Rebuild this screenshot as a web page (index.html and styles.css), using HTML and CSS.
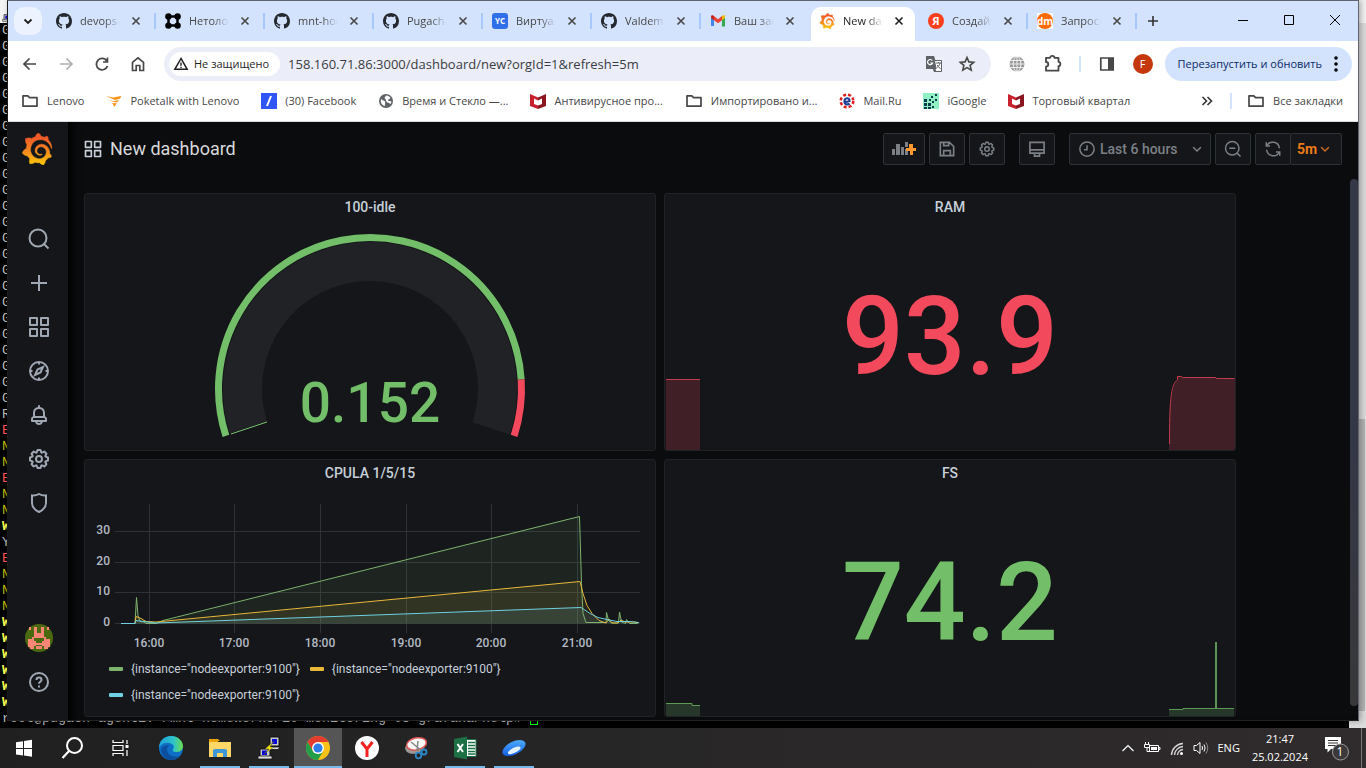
FILE: index.html
```html
<!DOCTYPE html>
<html lang="ru">
<head>
<meta charset="utf-8">
<title>New dashboard - Grafana</title>
<link rel="stylesheet" href="styles.css">
</head>
<body>
<svg class="defs" aria-hidden="true">
  <defs>
    <linearGradient id="gf" x1="0" y1="0" x2="0" y2="1"><stop offset="0.15" stop-color="#f05a28"/><stop offset="0.55" stop-color="#f7861f"/><stop offset="1" stop-color="#fbca0a"/></linearGradient>
    <linearGradient id="edgeTop" x1="0" y1="0" x2="1" y2="0"><stop offset="0" stop-color="#1fa0d8"/><stop offset="0.6" stop-color="#2cc3c9"/><stop offset="1" stop-color="#6fdc4f"/></linearGradient>
    <linearGradient id="disc" x1="0" y1="1" x2="1" y2="0"><stop offset="0" stop-color="#0a4fe0"/><stop offset="1" stop-color="#58bcff"/></linearGradient>
    <symbol id="i-github" viewBox="0 0 16 16"><path fill="#24292f" d="M8 0C3.58 0 0 3.58 0 8c0 3.54 2.29 6.53 5.47 7.59.4.07.55-.17.55-.38 0-.19-.01-.82-.01-1.49-2.01.37-2.53-.49-2.69-.94-.09-.23-.48-.94-.82-1.13-.28-.15-.68-.52-.01-.53.63-.01 1.08.58 1.23.82.72 1.21 1.87.87 2.33.66.07-.52.28-.87.51-1.07-1.78-.2-3.64-.89-3.64-3.95 0-.87.31-1.59.82-2.15-.08-.2-.36-1.02.08-2.12 0 0 .67-.21 2.2.82.64-.18 1.32-.27 2-.27s1.36.09 2 .27c1.53-1.04 2.2-.82 2.2-.82.44 1.1.16 1.92.08 2.12.51.56.82 1.27.82 2.15 0 3.07-1.87 3.75-3.65 3.95.29.25.54.73.54 1.48 0 1.07-.01 1.93-.01 2.2 0 .21.15.46.55.38A8.01 8.01 0 0 0 16 8c0-4.42-3.58-8-8-8z"/></symbol>
    <symbol id="i-close" viewBox="0 0 16 16"><path d="M4.5 4.5l7 7m0-7l-7 7" stroke="currentColor" stroke-width="1.6" fill="none"/></symbol>
    <symbol id="i-grafana" viewBox="0 0 24 24"><path fill="url(#gf)" stroke="url(#gf)" stroke-width=".4" d="M23.02 10.59a8.578 8.578 0 0 0-.862-3.034 8.911 8.911 0 0 0-1.789-2.445c.337-1.342-.413-2.505-.413-2.505-1.292-.08-2.113.4-2.416.62-.052-.02-.102-.044-.154-.064-.22-.089-.446-.172-.677-.247-.231-.073-.47-.14-.711-.197a9.867 9.867 0 0 0-.875-.161C14.557.753 12.94 0 12.94 0c-1.804 1.145-2.147 2.744-2.147 2.744l-.018.093c-.098.029-.2.057-.298.088-.138.042-.275.094-.413.143-.138.055-.275.107-.41.166a8.869 8.869 0 0 0-1.557.87l-.063-.029c-2.497-.955-4.716.195-4.716.195-.203 2.658.996 4.33 1.235 4.636a11.608 11.608 0 0 0-.607 2.635C1.636 12.677.953 15.014.953 15.014c1.926 2.214 4.171 2.351 4.171 2.351.003-.002.006-.002.006-.005.285.509.615.994.986 1.446.156.19.32.371.488.548-.704 2.009.099 3.68.099 3.68 2.144.08 3.553-.937 3.849-1.173a9.784 9.784 0 0 0 3.164.501h.08l.055-.003.107-.002.103-.005.003.002c1.01 1.44 2.788 1.646 2.788 1.646 1.264-1.332 1.337-2.653 1.337-2.94v-.058c0-.02-.003-.039-.003-.06.265-.187.52-.387.758-.6a7.875 7.875 0 0 0 1.415-1.7c1.43.083 2.437-.885 2.437-.885-.236-1.49-1.085-2.216-1.264-2.354l-.018-.013-.016-.013a.217.217 0 0 1-.031-.02c.008-.092.016-.18.02-.27.011-.162.016-.323.016-.48v-.253l-.005-.098-.008-.135a1.891 1.891 0 0 0-.01-.13c-.003-.042-.008-.083-.013-.125l-.016-.124-.018-.122a6.215 6.215 0 0 0-2.032-3.73 6.015 6.015 0 0 0-3.222-1.46 6.292 6.292 0 0 0-.85-.048l-.107.002h-.063l-.044.003-.104.008a4.777 4.777 0 0 0-3.335 1.695c-.332.4-.592.84-.768 1.297a4.594 4.594 0 0 0-.312 1.817l.003.091c.005.055.007.11.013.164a3.615 3.615 0 0 0 .698 1.82 3.53 3.53 0 0 0 1.827 1.282c.33.098.66.14.971.137.039 0 .078 0 .114-.002l.063-.003c.02 0 .041-.003.062-.003.034-.002.065-.007.099-.01.007 0 .018-.003.028-.003l.031-.005.06-.008a1.18 1.18 0 0 0 .112-.02c.036-.008.072-.013.109-.024a2.634 2.634 0 0 0 .914-.415c.028-.02.056-.041.085-.065a.248.248 0 0 0 .039-.35.244.244 0 0 0-.309-.06l-.078.042c-.09.044-.184.083-.283.116a2.476 2.476 0 0 1-.475.096c-.028.003-.054.006-.083.006l-.083.002c-.026 0-.054 0-.08-.002l-.102-.006h-.012l-.024.006c-.016-.003-.031-.003-.044-.006-.031-.002-.06-.007-.091-.01a2.59 2.59 0 0 1-.724-.213 2.557 2.557 0 0 1-.667-.438 2.52 2.52 0 0 1-.805-1.475 2.306 2.306 0 0 1-.029-.444l.006-.122v-.023l.002-.031c.003-.021.003-.04.005-.06a3.163 3.163 0 0 1 1.352-2.29 3.12 3.12 0 0 1 .937-.43 2.946 2.946 0 0 1 .776-.101h.06l.07.002.045.003h.026l.07.005a4.041 4.041 0 0 1 1.635.49 3.94 3.94 0 0 1 1.602 1.662 3.77 3.77 0 0 1 .397 1.414l.005.076.003.075c.002.026.002.05.002.075 0 .024.003.052 0 .07v.065l-.002.073-.008.174a6.195 6.195 0 0 1-.08.639 5.1 5.1 0 0 1-.267.927 5.31 5.31 0 0 1-.624 1.13 5.052 5.052 0 0 1-3.237 2.014 4.82 4.82 0 0 1-.649.066l-.039.003h-.287a6.607 6.607 0 0 1-1.716-.265 6.776 6.776 0 0 1-3.4-2.274 6.75 6.75 0 0 1-.746-1.15 6.616 6.616 0 0 1-.714-2.596l-.005-.083-.002-.02v-.056l-.003-.073v-.096l-.003-.104v-.07l.003-.163c.008-.22.026-.45.054-.678a8.707 8.707 0 0 1 .28-1.355c.128-.444.286-.872.473-1.277a7.04 7.04 0 0 1 1.456-2.1 5.925 5.925 0 0 1 .953-.763c.169-.111.343-.213.524-.306.089-.05.182-.091.273-.135.047-.02.093-.042.138-.062a7.177 7.177 0 0 1 .714-.267l.145-.045c.049-.015.098-.026.148-.041.098-.029.197-.052.296-.076.049-.013.1-.02.15-.033l.15-.032.151-.028.076-.013.075-.01.153-.024c.057-.01.114-.013.171-.023l.169-.021c.036-.003.073-.008.106-.01l.073-.008.036-.003.042-.002c.057-.003.114-.008.171-.01l.086-.006h.023l.037-.003.145-.007a7.999 7.999 0 0 1 1.708.125 7.917 7.917 0 0 1 2.048.68 8.253 8.253 0 0 1 1.672 1.09l.09.077.089.078c.06.052.114.107.171.159.057.052.112.106.166.16.052.055.107.107.159.164a8.671 8.671 0 0 1 1.41 1.978c.012.026.028.052.04.078l.04.078.075.156c.023.051.05.1.07.153l.065.15a8.848 8.848 0 0 1 .45 1.34.19.19 0 0 0 .201.142.186.186 0 0 0 .172-.184c.01-.246.002-.532-.024-.856z"/></symbol>
    <symbol id="i-folder" viewBox="0 0 18 16"><path d="M2 13.2V2.8h4.8l1.8 1.9h7.4v8.5z" fill="none" stroke="#474747" stroke-width="1.7" stroke-linejoin="round"/></symbol>
    <symbol id="i-mcafee" viewBox="0 0 16 16"><path fill="#c8202c" d="M0 1l8 3.5V16l-8-3z"/><path fill="#8c1620" d="M16 1L8 4.500V16l8-3z"/><path fill="#fff" d="M4 5.600l4 1.800 4-1.800v5.400l-4 1.400-4-1.400z"/></symbol>
    <symbol id="i-cog" viewBox="0 0 24 24"><path fill="currentColor" d="M21.32,9.55l-1.89-.63.89-1.78A1,1,0,0,0,20.13,6L18,3.87a1,1,0,0,0-1.15-.19l-1.78.89-.63-1.89A1,1,0,0,0,13.5,2h-3a1,1,0,0,0-.95.68L8.92,4.57,7.14,3.68A1,1,0,0,0,6,3.87L3.87,6a1,1,0,0,0-.19,1.15l.89,1.78-1.89.63A1,1,0,0,0,2,10.5v3a1,1,0,0,0,.68.95l1.89.63-.89,1.78A1,1,0,0,0,3.87,18L6,20.13a1,1,0,0,0,1.15.19l1.78-.89.63,1.89a1,1,0,0,0,.95.68h3a1,1,0,0,0,.95-.68l.63-1.89,1.78.89A1,1,0,0,0,18,20.13L20.13,18a1,1,0,0,0,.19-1.150l-.89-1.78,1.89-.63A1,1,0,0,0,22,13.5v-3A1,1,0,0,0,21.32,9.55ZM20,12.78l-1.2.4A2,2,0,0,0,17.64,16l.57,1.14-1.1,1.1L16,17.64a2,2,0,0,0-2.79,1.16l-.4,1.2H11.22l-.4-1.2A2,2,0,0,0,8,17.64l-1.14.57-1.1-1.1L6.36,16A2,2,0,0,0,5.2,13.18L4,12.78V11.22l1.2-.4A2,2,0,0,0,6.36,8L5.79,6.89l1.1-1.1L8,6.36A2,2,0,0,0,10.82,5.2l.4-1.2h1.56l.4,1.2A2,2,0,0,0,16,6.36l1.14-.57,1.1,1.1L17.64,8a2,2,0,0,0,1.16,2.79l1.2.4ZM12,8a4,4,0,1,0,4,4A4,4,0,0,0,12,8Zm0,6a2,2,0,1,1,2-2A2,2,0,0,1,12,14Z"/></symbol>
    <symbol id="i-apps" viewBox="0 0 24 24"><path d="M3 3h7v7H3zM14 3h7v7h-7zM3 14h7v7H3zM14 14h7v7h-7z" fill="none" stroke="currentColor" stroke-width="2" stroke-linejoin="round"/></symbol>
    <symbol id="i-angle" viewBox="0 0 16 16"><path d="M4.500 6.500l3.500 3.500 3.500-3.500" fill="none" stroke="currentColor" stroke-width="1.5" stroke-linecap="round"/></symbol>
    <symbol id="i-putty" viewBox="0 0 24 24"><path d="M13 1h9v9h-9zM3 13h10v8H3z" fill="#c9c9c9" stroke="#111"/><path d="M15 3h5v5h-5zM5 14.500h5v4.500H5z" fill="#0808d8"/><path d="M11 11h12l-2 2.500H11zM1 20h14v3H1z" fill="#ddd" stroke="#111" stroke-width=".8"/><path d="M17 5l-9 8h4l-5 5 10-7h-4z" fill="#ffee00" stroke="#444" stroke-width=".5"/></symbol>
  </defs>
</svg>

<div class="desktop">
  <section class="terminal" aria-label="Terminal">
    <div class="terminal-title"><svg width="16" height="16"><use href="#i-putty"/></svg></div>
    <div class="terminal-main">
      <div class="terminal-lines">
        <p>G</p><p>G</p><p>G</p><p>G</p><p>G</p><p>G</p><p>G</p><p>G</p><p>G</p><p>G</p><p>G</p><p>G</p>
        <p>G</p><p>G</p><p>G</p><p>G</p><p>G</p><p>G</p><p>G</p><p>G</p><p>G</p><p>G</p><p>G</p><p>G</p>
        <p>R</p><p class="t-red">E</p><p class="t-olive">N</p><p class="t-olive">N</p><p class="t-red">E</p><p class="t-olive">N</p><p class="t-olive">N</p>
        <p class="t-yellow">W</p><p>Y</p><p class="t-red">E</p><p class="t-olive">N</p><p class="t-olive">N</p><p class="t-olive">N</p>
        <p class="t-yellow">W</p><p class="t-yellow">W</p><p class="t-yellow">W</p><p class="t-yellow">W</p><p class="t-yellow">W</p><p class="t-yellow">W</p>
        <p>root@pugach-agent1:~/mnt-homeworks/10-monitoring-03-grafana/help# <span class="cursor"></span></p>
      </div>
      <div class="terminal-scroll"><i></i></div>
    </div>
  </section>

  <main class="browser">
    <div class="tabstrip">
      <button class="tab-search" aria-label="Поиск вкладок"><svg width="16" height="16" viewBox="0 0 16 16"><path d="M4.500 6.500L8 10l3.500-3.500" fill="none" stroke="#1f1f1f" stroke-width="1.800"/></svg></button>
      <div class="tabs">
        <div class="tab"><svg class="fav"><use href="#i-github"/></svg><span>devops-n</span><button aria-label="Закрыть"><svg><use href="#i-close"/></svg></button></div>
        <div class="tab"><svg class="fav" viewBox="0 0 16 16"><path d="M4 3.500h8M4 12.500h8M3.500 4v8M12.500 4v8" stroke="#000" stroke-width="2.500"/><circle cx="3.400" cy="3.400" r="3.200"/><circle cx="12.600" cy="3.400" r="3.200"/><circle cx="3.400" cy="12.600" r="3.200"/><circle cx="12.600" cy="12.600" r="3.200"/></svg><span>Нетология</span><button aria-label="Закрыть"><svg><use href="#i-close"/></svg></button></div>
        <div class="tab"><svg class="fav"><use href="#i-github"/></svg><span>mnt-home</span><button aria-label="Закрыть"><svg><use href="#i-close"/></svg></button></div>
        <div class="tab"><svg class="fav"><use href="#i-github"/></svg><span>Pugach-D</span><button aria-label="Закрыть"><svg><use href="#i-close"/></svg></button></div>
        <div class="tab"><svg class="fav" viewBox="0 0 16 16"><rect width="16" height="16" rx="3" fill="#2f6fe8"/><text x="8" y="11" class="yc">YC</text></svg><span>Виртуаль</span><button aria-label="Закрыть"><svg><use href="#i-close"/></svg></button></div>
        <div class="tab"><svg class="fav"><use href="#i-github"/></svg><span>Valdemar</span><button aria-label="Закрыть"><svg><use href="#i-close"/></svg></button></div>
        <div class="tab before-active"><svg class="fav" viewBox="0 0 16 16"><path fill="#4285f4" d="M1 4v9h3V6z"/><path fill="#34a853" d="M12 6v7.500h3V4z"/><path fill="#c5221f" d="M1 3.500C1 2 2.600 2 3.300 2.500L4 3v4.300L1 5z"/><path fill="#ea4335" d="M4 3l4 3.200L12 3v4.300L8 10.300 4 7.300z"/><path fill="#fbbc04" d="M15 3.500c0-1.500-1.600-1.500-2.300-1L12 3v4.300L15 5z"/></svg><span>Ваш зака</span><button aria-label="Закрыть"><svg><use href="#i-close"/></svg></button></div>
        <div class="tab active"><svg class="fav"><use href="#i-grafana"/></svg><span>New dash</span><button aria-label="Закрыть"><svg><use href="#i-close"/></svg></button></div>
        <div class="tab"><svg class="fav" viewBox="0 0 16 16"><circle cx="8" cy="8" r="8" fill="#fc3f1d"/><text x="8" y="12" class="ya">Я</text></svg><span>Создайте</span><button aria-label="Закрыть"><svg><use href="#i-close"/></svg></button></div>
        <div class="tab"><svg class="fav" viewBox="0 0 16 16"><rect width="16" height="16" fill="#fff"/><circle cx="8" cy="8" r="8" fill="#ff6a00"/><text x="8" y="12" class="dm">dm</text></svg><span>Запросы</span><button aria-label="Закрыть"><svg><use href="#i-close"/></svg></button></div>
      </div>
      <button class="new-tab" aria-label="Новая вкладка"><svg width="16" height="16" viewBox="0 0 16 16"><path d="M8 3v10M3 8h10" stroke="#333" stroke-width="1.600"/></svg></button>
      <div class="win-controls">
        <button aria-label="Свернуть"><svg width="12" height="12" viewBox="0 0 12 12"><path d="M1 6.500h10" stroke="#000"/></svg></button>
        <button aria-label="Развернуть"><svg width="12" height="12" viewBox="0 0 12 12"><path d="M1.500 1.500h9v9h-9z" fill="none" stroke="#000"/></svg></button>
        <button aria-label="Закрыть окно"><svg width="12" height="12" viewBox="0 0 12 12"><path d="M1 1l10 10M11 1L1 11" stroke="#000"/></svg></button>
      </div>
    </div>

    <div class="toolbar">
      <button aria-label="Назад"><svg viewBox="0 0 20 20"><path d="M16 10H4.500M9.500 4.500L4 10l5.500 5.500" fill="none" stroke="#474747" stroke-width="1.700"/></svg></button>
      <button aria-label="Вперёд"><svg viewBox="0 0 20 20"><path d="M4 10h11.500M10.500 4.500L16 10l-5.500 5.500" fill="none" stroke="#b0b0b0" stroke-width="1.700"/></svg></button>
      <button aria-label="Обновить"><svg viewBox="0 0 20 20"><path d="M15.500 12A5.700 5.700 0 1 1 15 7.200" fill="none" stroke="#474747" stroke-width="1.800"/><path d="M16.300 3.500v5.300H11v-1.500h2.500L15 3.500z" fill="#474747"/></svg></button>
      <button aria-label="Главная"><svg viewBox="0 0 20 20"><path d="M4.500 16.500V8.300L10 3.800l5.500 4.500v8.200h-3.700v-5H8.200v5z" fill="none" stroke="#474747" stroke-width="1.700"/></svg></button>
      <div class="omnibox">
        <button class="chip"><svg width="16" height="16" viewBox="0 0 16 16"><path d="M8 2.500L1.800 13.300h12.400z" fill="none" stroke="#1f1f1f" stroke-width="1.500"/><path d="M8 6.500v3.300M8 10.700v1.400" stroke="#1f1f1f" stroke-width="1.400"/></svg>Не защищено</button>
        <input type="text" aria-label="Адрес" value="158.160.71.86:3000/dashboard/new?orgId=1&amp;refresh=5m">
        <button aria-label="Перевести"><svg viewBox="0 0 20 20"><path d="M2 2h8l1.300 4H17v12h-7l-1.200-3H2z" fill="#5f6368"/><path d="M10.500 6.500H17.500v11h-5.500l-1.500-2.500h1.500z" fill="#fff" stroke="#5f6368"/><path d="M12 9h5M14.500 8v1M16 9c-.5 2.500-2 4-3.500 5M13 11l3.500 4" stroke="#5f6368" fill="none"/><path d="M8.300 6.600A2.600 2.600 0 1 0 8.600 9H6.300" stroke="#fff" stroke-width="1.200" fill="none"/></svg></button>
        <button aria-label="В закладки"><svg viewBox="0 0 20 20"><path d="M10 3.500l1.900 4.400 4.800.4-3.600 3.100 1.100 4.700L10 13.600l-4.200 2.500 1.100-4.700-3.600-3.100 4.800-.4z" fill="none" stroke="#474747" stroke-width="1.600"/></svg></button>
      </div>
      <div class="extensions">
        <button aria-label="Расширение"><svg viewBox="0 0 20 20"><circle cx="10" cy="10" r="7.500" fill="#9a9a9a"/><path d="M2.500 10h15M10 2.500v15M3.500 6.500h13M3.500 13.500h13" stroke="#fff" stroke-width=".8"/><ellipse cx="10" cy="10" rx="3.800" ry="7.500" fill="none" stroke="#fff" stroke-width=".8"/></svg></button>
        <button aria-label="Расширения"><svg viewBox="0 0 20 20"><path d="M3 3.800h4c0-2.500 4.500-2.500 4.500 0h4v4c2.500 0 2.500 4.400 0 4.400v4.500H3v-4c3 0 3-4.700 0-4.700z" fill="none" stroke="#474747" stroke-width="1.800" stroke-linejoin="round"/></svg></button>
        <i class="sep"></i>
        <button aria-label="Боковая панель"><svg viewBox="0 0 20 20"><path d="M3.800 4h12.400v12H3.800z" fill="none" stroke="#474747" stroke-width="1.700"/><path d="M11 4h5v12h-5z" fill="#474747"/></svg></button>
        <button class="profile">F</button>
      </div>
      <button class="restart">Перезапустить и обновить<svg width="4" height="16" viewBox="0 0 4 16"><circle cx="2" cy="2" r="1.800"/><circle cx="2" cy="8" r="1.800"/><circle cx="2" cy="14" r="1.800"/></svg></button>
    </div>

    <nav class="bookmarks">
      <a href="#"><svg class="folder"><use href="#i-folder"/></svg>Lenovo</a>
      <a href="#"><svg viewBox="0 0 16 16"><path fill="#f7941d" d="M0 3l7 1.500L15 3c0 2-1 3-3 3.300L9 7zM2 7l5 1 6-.8c-.5 1.800-2 2.200-4 2zM6 10l5 .2L8 14l-.5-2z"/></svg>Poketalk with Lenovo</a>
      <a href="#"><svg viewBox="0 0 16 16"><path fill="#2f55f5" d="M0 0h16v16H0z"/><path d="M10 3L6 13" stroke="#fff" stroke-width="2"/></svg>(30) Facebook</a>
      <a href="#"><svg viewBox="0 0 16 16"><circle cx="8" cy="8" r="7" fill="#5f6368"/><path fill="#fff" d="M3 6c2 2 3 1 4 2.500S6 11 7.500 13c-3 0-5.500-3-4.500-7zM8 2.500c2 0 4 1 4.500 2.500-1 1.500-2 .5-2.500 2.500 1 1 3 0 3.500 1.500l-1 2c-2-2-4-1-4.500-3.500C8 6 7 6 6.500 5z"/></svg>Время и Стекло —...</a>
      <a href="#"><svg><use href="#i-mcafee"/></svg>Антивирусное про...</a>
      <a href="#"><svg class="folder"><use href="#i-folder"/></svg>Импортировано и...</a>
      <a href="#"><svg viewBox="0 0 16 16"><circle cx="8" cy="8" r="6.300" fill="none" stroke="#e02020" stroke-width="2.600" stroke-dasharray="3 2"/><path d="M5.500 9.500l5-1.500c0-4-5-3.500-5 .5 0 3.500 4 3.300 5 2" fill="none" stroke="#1c3f94" stroke-width="2.200"/></svg>Mail.Ru</a>
      <a href="#"><svg viewBox="0 0 16 16"><path fill="#8ff0c4" d="M0 0h16v16H0z"/><path d="M1 6h3v3H1zM1 10h3v3H1zM5 10h3v3H5zM1 14h3v2H1zM5 14h3v2H5zM9 13h2v2H9zM6 6h2v2H6zM9 8h2v2H9zM8 3h2v2H8zM12 1h2v2h-2zM12 6h2v2h-2z" fill="#0b3b4f"/></svg>iGoogle</a>
      <a href="#"><svg><use href="#i-mcafee"/></svg>Торговый квартал</a>
      <div class="bookmarks-end">
        <button aria-label="Ещё закладки"><svg viewBox="0 0 16 16"><path d="M3.500 4l4 4-4 4M8.500 4l4 4-4 4" fill="none" stroke="#333" stroke-width="1.600"/></svg></button>
        <i class="sep"></i>
        <a href="#"><svg class="folder"><use href="#i-folder"/></svg>Все закладки</a>
      </div>
    </nav>

    <div class="grafana">
      <aside class="sidebar">
        <a href="#" class="logo" aria-label="Grafana"><svg width="32" height="32"><use href="#i-grafana"/></svg></a>
        <nav class="menu">
          <a href="#" aria-label="Search"><svg viewBox="0 0 24 24"><circle cx="11" cy="11" r="8.500"/><path d="M17 17l4.500 4.500"/></svg></a>
          <a href="#" aria-label="Create"><svg viewBox="0 0 24 24"><path d="M12 4v16M4 12h16"/></svg></a>
          <a href="#" aria-label="Dashboards"><svg><use href="#i-apps"/></svg></a>
          <a href="#" aria-label="Explore"><svg viewBox="0 0 24 24"><circle cx="12" cy="12" r="9"/><path d="M16 8l-2.500 5.500L8 16l2.500-5.500z M12 3v2.500M12 18.500V21M3 12h2.500M18.500 12H21"/></svg></a>
          <a href="#" aria-label="Alerting"><svg viewBox="0 0 24 24"><path class="solid" d="M18,13.180V10a6,6,0,0,0-5-5.910V3a1,1,0,0,0-2,0V4.090A6,6,0,0,0,6,10v3.180A3,3,0,0,0,4,16v2a1,1,0,0,0,1,1H8.140a4,4,0,0,0,7.720,0H19a1,1,0,0,0,1-1V16A3,3,0,0,0,18,13.180ZM8,10a4,4,0,0,1,8,0v3H8Zm4,10a2,2,0,0,1-1.720-1h3.440A2,2,0,0,1,12,20Zm6-3H6V16a1,1,0,0,1,1-1H17a1,1,0,0,1,1,1Z"/></svg></a>
          <a href="#" aria-label="Configuration"><svg class="plain"><use href="#i-cog"/></svg></a>
          <a href="#" aria-label="Server admin"><svg viewBox="0 0 24 24"><path d="M5 4.500q3.500.5 7-1.500 3.500 2 7 1.500V12q0 5.500-7 9-7-3.500-7-9z"/></svg></a>
        </nav>
        <nav class="menu menu-bottom">
          <a href="#" aria-label="Profile"><svg class="avatar" viewBox="0 0 28 28"><circle cx="14" cy="14" r="14" fill="#4b6a10"/><path fill="#ff8676" d="M4 3h2v3H4zM22 3h2v3h-2zM9 3h3v6h4V3h3v11H9zM3 15h4v-2h2v4h2v2h6v-2h2v-4h2v2h4v8h-2v2h-4v-3h-2v-1h-6v1H9v3H5v-2H3zM11 22h6v3h-6z"/></svg></a>
          <a href="#" aria-label="Help"><svg viewBox="0 0 24 24"><circle cx="12" cy="12" r="9"/><path d="M9.500 10c0-3.200 5-3.200 5 0 0 1.800-2.500 1.800-2.500 3.800M12 15.500v2"/></svg></a>
        </nav>
      </aside>

      <section class="dash">
        <header class="dash-head">
          <svg class="apps" width="20" height="20"><use href="#i-apps"/></svg>
          <h1>New dashboard</h1>
          <div class="group">
            <button class="wide" aria-label="Add panel"><svg width="26" height="20" viewBox="0 0 26 20"><path fill="#7b8087" d="M1 10h3v6H1zM5 5h4v11H5zM10 8h3v8h-3zM14 3h3v5h-3v2h3v6h-3z"/><path fill="#ff9830" d="M18 5h4v4h3v3h-3v4h-3v-4h-4V9h3z"/></svg></button>
            <button aria-label="Save"><svg width="20" height="20" viewBox="0 0 24 24"><path d="M4 4h11l5 5v11H4zM8 4v4h6V4M8 20v-6h8v6"/></svg></button>
            <button aria-label="Settings"><svg class="plain" width="18" height="18"><use href="#i-cog"/></svg></button>
          </div>
          <div class="group"><button aria-label="View mode"><svg width="20" height="20" viewBox="0 0 24 24"><path d="M3.500 4h17v13h-17zM3.500 13h17M9 17v3.500h6V17"/></svg></button></div>
          <div class="group">
            <button class="range"><svg width="18" height="18" viewBox="0 0 24 24"><circle cx="12" cy="12" r="9.500"/><path d="M12 7v6H8"/></svg><span>Last 6 hours</span><svg class="plain" width="16" height="16"><use href="#i-angle"/></svg></button>
            <button aria-label="Zoom out"><svg width="18" height="18" viewBox="0 0 24 24"><circle cx="11" cy="11" r="9"/><path d="M17.500 17.500L22 22M7 11h8"/></svg></button>
            <div class="refresh">
              <button aria-label="Refresh"><svg width="18" height="18" viewBox="0 0 24 24"><path d="M3 3v5h5M21 21v-5h-5M3.500 8a9 9 0 0 1 17 3M20.500 16a9 9 0 0 1-17-3"/></svg></button>
              <button class="interval">5m<svg class="plain" width="16" height="16"><use href="#i-angle"/></svg></button>
            </div>
          </div>
        </header>

        <div class="panels">
          <article class="panel">
            <h2>100-idle</h2>
            <svg class="fill" viewBox="85 223 570 228">
              <path d="M230.200 435.400A147 147 0 1 1 509.800 435.400L472.700 423.400A108 108 0 1 0 267.300 423.400Z" fill="#202226"/>
              <path d="M225.900 436.800A151.500 151.500 0 1 1 521.200 380.500" fill="none" stroke="#73bf69" stroke-width="7"/>
              <path d="M521.200 380.500A151.500 151.500 0 0 1 514.100 436.800" fill="none" stroke="#f2495c" stroke-width="7"/>
              <path d="M231 435L267 423" stroke="#73bf69"/>
              <text x="370" y="423" class="gauge-value">0.152</text>
            </svg>
          </article>
          <article class="panel">
            <h2>RAM</h2>
            <svg class="spark" viewBox="0 0 570 84" preserveAspectRatio="none">
              <path class="red-area" d="M1 84V13h34v71zM504 84V70l1-28 2-14 3-10 3-4V10l4 0 1 1h33l1 1h18v72z"/>
              <path class="red-line" d="M1 13.500h34M504.500 78c0-40 1-60 8-64v-3.500h4l1 1h33l1 1h18"/>
            </svg>
            <p class="big red">93.9</p>
          </article>
          <article class="panel">
            <h2>CPULA 1/5/15</h2>
            <svg class="fill" viewBox="85 488 570 168">
              <path class="grid" d="M115 531.500H640M115 562.500H640M115 592.500H640M115 623.500H640M149.500 504V633M234.500 504V633M320.500 504V633M406.500 504V633M491.500 504V633M577.500 504V633"/>
              <g class="axis">
                <text x="149" y="647">16:00</text><text x="234" y="647">17:00</text><text x="320" y="647">18:00</text><text x="406" y="647">19:00</text><text x="491" y="647">20:00</text><text x="577" y="647">21:00</text>
              </g>
              <g class="axis axis-y">
                <text x="110" y="534">30</text><text x="110" y="565">20</text><text x="110" y="595">10</text><text x="110" y="626">0</text>
              </g>
              <path fill="#7eb26d" fill-opacity=".1" d="M121 623.500h14l1-26 2 20 3 4 17 1 421-106 2 65 2 30 3 12h20l2-10 3 10h6l2-11 3 11h16z"/>
              <path fill="#eab839" fill-opacity=".1" d="M135 623.500l2-7 4 2 5 3 12 1 421-41 5 18 5 13 10 8 10 3h30z"/>
              <path fill="#6ed0e0" fill-opacity=".1" d="M135 623.500l2-3 21 2 421-15 10 7 12 5 38 4z"/>
              <path class="line" stroke="#7eb26d" d="M121 623.500h14l1.500-26 1.500 18 2 6 4 .500 2 1.500h10l7-3L579.500 516.500l2 67 1.500 30 3 9h20l.500-10 2 8 3 2.500h7l1-11 2 10 4 1.500 1-4 3 4h8"/>
              <path class="line" stroke="#eab839" d="M121 623.500h14l1-7 5 2 5 3 10 .500L580 581.500l3 12 4 12 5 8 7 7 7 2.500 3-4 3 4h6l3-3 4 2h10l3 1"/>
              <path class="line" stroke="#6ed0e0" d="M121 623.500h14l1-3 20 2.500L581 607.500l9 6 8 4 9 2 10 2h12l10 1"/>
            </svg>
            <ul class="legend">
              <li class="l-green">{instance="nodeexporter:9100"}</li>
              <li class="l-yellow">{instance="nodeexporter:9100"}</li>
              <li class="l-blue">{instance="nodeexporter:9100"}</li>
            </ul>
          </article>
          <article class="panel">
            <h2>FS</h2>
            <svg class="spark" viewBox="0 0 570 84" preserveAspectRatio="none">
              <path class="green-area" d="M1 84V71h26v2h8v11zM504 84V77h14v-1h51v8z"/>
              <path class="green-line" d="M1 71.500h26v2h8M504 77.500h14v-1h51"/>
              <path class="green-line spike" d="M551 76V10"/>
            </svg>
            <p class="big green">74.2</p>
          </article>
        </div>
        <i class="page-thumb"></i>
      </section>
    </div>
  </main>
</div>

<footer class="taskbar">
  <div class="apps-bar">
    <button aria-label="Пуск"><svg viewBox="0 0 24 24"><path fill="#fff" d="M4 6.200l7-1V12H4zM12 5l8-1.200V12h-8zM4 13h7v6.500l-7-1zM12 13h8v7.800l-8-1.200z"/></svg></button>
    <button aria-label="Поиск"><svg viewBox="0 0 24 24"><circle cx="13.500" cy="9.500" r="7.500" fill="none" stroke="#fff" stroke-width="2"/><path d="M8 15L1.500 22" stroke="#fff" stroke-width="2.200"/></svg></button>
    <button aria-label="Представление задач"><svg viewBox="0 0 24 24"><path d="M3 4v2.500h10V4M3 20v-2.500h10V20M3 9.500h10v5H3zM17 4v4M17 14v6" fill="none" stroke="#fff" stroke-width="1.200"/><path d="M15.500 9h3v3h-3z" fill="#fff"/></svg></button>
    <button aria-label="Edge"><svg viewBox="0 0 24 24"><circle cx="12" cy="12" r="12" fill="#0f6fc6"/><path d="M0 12C0 5 5 0 12 0s12 5 12 10-4 6-7 6-4-1-3-2.500S16 8 10 7 1 10 0 12z" fill="url(#edgeTop)"/><path d="M8 13c0 6 6 9 13 7-5 6-15 5-18-2s2-9 8-9c-2 1-3 2.500-3 4z" fill="#0b4f9e"/></svg></button>
    <button class="open" aria-label="Проводник"><svg viewBox="0 0 24 24"><path fill="#e8a400" d="M1 3h9l2 2h-2v4H1z"/><path fill="#ffd766" d="M1 6h22v15H1z"/><path fill="#3f97d8" d="M5 21v-6q0-2 2-2h10q2 0 2 2v6h-4v-4H9v4z"/></svg></button>
    <button class="open" aria-label="PuTTY"><svg><use href="#i-putty"/></svg></button>
    <button class="open current" aria-label="Chrome"><svg viewBox="0 0 24 24"><circle cx="12" cy="12" r="12" fill="#fbc116"/><path d="M1.600 6A12 12 0 0 1 22.400 6H12L6.800 15z" fill="#e33b2e"/><path d="M1.600 6l5.200 9L12 18l0 6A12 12 0 0 1 1.600 6z" fill="#229d4a"/><path d="M12 24l5.200-9L12 18z" fill="#229d4a"/><circle cx="12" cy="12" r="6" fill="#fff"/><circle cx="12" cy="12" r="4.600" fill="#2f7de9"/></svg></button>
    <button aria-label="Яндекс"><svg viewBox="0 0 24 24"><circle cx="12" cy="12" r="12" fill="#fff"/><path d="M6.500 6l5.500 7 5.500-7M12 12.500V21" fill="none" stroke="#f52020" stroke-width="3"/></svg></button>
    <button aria-label="Ножницы"><svg viewBox="0 0 24 24"><ellipse cx="11" cy="11" rx="10" ry="6.500" fill="#999" transform="rotate(-15 11 11)"/><ellipse cx="12.500" cy="8" rx="10" ry="6" fill="#f7f7f7" stroke="#e25555" stroke-width="1.500" transform="rotate(-12 12 8)"/><path d="M7 6l11 9M14 5l-1 10" stroke="#888" stroke-width="1.500"/><circle cx="20" cy="16" r="2.500" fill="none" stroke="#2a87c8" stroke-width="1.800"/><circle cx="14.500" cy="19.500" r="2.800" fill="none" stroke="#2a87c8" stroke-width="1.800"/></svg></button>
    <button class="open" aria-label="Excel"><svg viewBox="0 0 24 24"><path fill="#fff" stroke="#1d7044" d="M13 3.500h10v17H13z"/><path d="M15 6.500h7M15 9.500h7M15 12.500h7M15 15.500h7M15 18h7" stroke="#1d7044" stroke-width="1.500"/><path fill="#1d7044" d="M1 3l13-2.500v23L1 21z"/><path d="M4.500 8l5.500 8M10 8l-5.500 8" stroke="#fff" stroke-width="2"/></svg></button>
    <button class="open" aria-label="Яндекс Диск"><svg viewBox="0 0 24 24"><ellipse cx="12" cy="12" rx="12.500" ry="6.500" fill="url(#disc)" transform="rotate(-27 12 12)"/><ellipse cx="12.500" cy="14.500" rx="7" ry="2.500" fill="#e8f4ff" transform="rotate(-27 12 15)"/></svg></button>
  </div>
  <div class="tray">
    <button aria-label="Скрытые значки"><svg width="14" height="14" viewBox="0 0 14 14"><path d="M1.500 10L7 4.500l5.500 5.500" fill="none" stroke="#fff" stroke-width="1.200"/></svg></button>
    <svg width="18" height="16" viewBox="0 0 18 16"><path d="M6.500 5.500h9v6h-9z" fill="none" stroke="#fff"/><path d="M8 7h6v3H8z" fill="#fff"/><path d="M16 7.500h1v2h-1M2.500 2v3M5.500 2v3M1.500 4.500h5v3h-5zM4 7.500v4h3" fill="none" stroke="#fff"/></svg>
    <svg width="16" height="16" viewBox="0 0 16 16"><path d="M2.500 15A12 12 0 0 1 14 3.500M5.500 15A9 9 0 0 1 14 6.500M8.500 15a6 6 0 0 1 5.500-5.500" fill="none" stroke="#d5d5d5" stroke-width="1.400"/><circle cx="12.500" cy="13.500" r="1.500" fill="#fff"/></svg>
    <svg width="16" height="16" viewBox="0 0 16 16"><path d="M1 5.500h2.500L7 2.500v11l-3.500-3H1z" fill="none" stroke="#fff"/><path d="M9 6q1.200 2 0 4M11 4.500q2.300 3.500 0 7" fill="none" stroke="#fff"/><path d="M13 2.500q3.500 5.500 0 11" fill="none" stroke="#888"/></svg>
    <span>ENG</span>
    <time>21:47<br>25.02.2024</time>
    <button class="notify" aria-label="Уведомления"><svg width="26" height="26" viewBox="0 0 26 26"><path fill="#fff" d="M1 2h16v12H7l-3.500 3.500V14H1z"/><path d="M4 5.500h10M4 8h10M4 10.500h8" stroke="#333"/><circle cx="16.500" cy="17" r="8" fill="#3c393a" stroke="#9a9a9a"/><text x="16" y="21" class="count">1</text></svg></button>
    <i class="show-desktop"></i>
  </div>
</footer>
</body>
</html>
```

FILE: styles.css
```css
* { box-sizing: border-box; }
body {
  margin: 0;
  height: 100vh;
  display: flex;
  flex-direction: column;
  overflow: hidden;
  background: #000;
  font: 11px/16px "Open Sans", "Noto Sans", sans-serif;
}
button {
  border: 0;
  padding: 0;
  background: none;
  color: inherit;
  font: inherit;
  display: flex;
  align-items: center;
  justify-content: center;
}
svg { display: block; flex: none; }
a { color: inherit; text-decoration: none; }
h1, h2, p, ul { margin: 0; padding: 0; }
.defs { position: absolute; width: 0; height: 0; }

/* Desktop and terminal */
.desktop { flex: 1; min-height: 0; position: relative; }
.terminal {
  position: absolute;
  inset: 0;
  display: flex;
  flex-direction: column;
  overflow: hidden;
}
.terminal-title { flex: none; height: 23px; padding: 6px 0 0 2px; background: #f3f3f3; }
.terminal-main { flex: 1; min-height: 0; display: flex; }
.terminal-lines {
  flex: 1;
  padding-left: 2px;
  color: #bbb;
  font: 10pt/16px "Liberation Mono", monospace;
}
.terminal-lines p { height: 16px; white-space: pre; }
.t-red { color: #ff5555; }
.t-olive { color: #bbbb00; }
.t-yellow { color: #ffff55; font-weight: bold; }
.cursor { display: inline-block; width: 8px; height: 14px; border: 1px solid #00ff00; vertical-align: middle; }
.terminal-scroll { width: 17px; padding: 396px 1px 17px 0; background: #dcdcdc; }
.terminal-scroll i { display: block; height: 100%; background: #b4b4b4; }

/* Browser window */
.browser {
  position: absolute;
  inset: 0 7px 7px;
  display: flex;
  flex-direction: column;
  border: 1px solid #5f6470;
  border-left-color: #1a1a1a;
  border-bottom-color: #222;
  background: #fff;
  box-shadow: 2px 0 6px rgba(0, 0, 0, .3);
  color: #474747;
}
.tabstrip { height: 40px; flex: none; display: flex; background: #d3e3fd; }
.tab-search {
  width: 28px;
  height: 28px;
  margin: 6px 5px 0 6px;
  border-radius: 10px;
  background: #ecf2fe;
}
.tabs { display: flex; flex: 0 1 1090px; }
.tab {
  flex: 1 1 0;
  min-width: 0;
  display: flex;
  align-items: center;
  padding-left: 9px;
  position: relative;
}
.tab::after {
  content: "";
  position: absolute;
  right: 0;
  top: 12px;
  width: 2px;
  height: 16px;
  background: #a8c7fa;
}
.tab .fav { width: 16px; height: 16px; }
.tab span {
  width: 40px;
  margin: 0 8px;
  overflow: hidden;
  white-space: nowrap;
  -webkit-mask-image: linear-gradient(90deg, #000 60%, transparent);
  mask-image: linear-gradient(90deg, #000 60%, transparent);
}
.tab button, .tab button svg { width: 16px; height: 16px; }
.before-active::after, .active::after { display: none; }
.tab.active { color: #1f1f1f; z-index: 1; }
.tab.active::before {
  content: "";
  position: absolute;
  z-index: -1;
  inset: 6px 4px 0 1px;
  border-radius: 10px 10px 0 0;
  background: #fff;
}
.yc { font: bold 8px "Open Sans", sans-serif; fill: #fff; text-anchor: middle; }
.ya { font: bold 11px "Open Sans", sans-serif; fill: #fff; text-anchor: middle; }
.dm { font: bold 10px "Open Sans", sans-serif; fill: #fff; text-anchor: middle; }
.count { font: 12px "Open Sans", sans-serif; fill: #fff; text-anchor: middle; }
.new-tab { width: 32px; }
.win-controls { display: flex; margin-left: auto; }
.win-controls button { width: 46px; height: 38px; }

.toolbar { height: 46px; flex: none; display: flex; align-items: center; gap: 16px; padding: 0 6px 0 12px; }
.toolbar button { flex: none; }
.toolbar button > svg[viewBox="0 0 20 20"] { width: 20px; height: 20px; }
.omnibox {
  flex: 1;
  height: 34px;
  display: flex;
  align-items: center;
  gap: 13px;
  padding: 0 14px 0 5px;
  border-radius: 17px;
  background: #ebeef8;
}
.toolbar .chip {
  height: 24px;
  gap: 5px;
  padding: 0 11px 0 4px;
  margin-right: -5px;
  border-radius: 12px;
  background: #fff;
  color: #1f1f1f;
  font-weight: 500;
}
.omnibox input {
  flex: 1;
  min-width: 0;
  border: 0;
  padding: 0;
  background: none;
  color: #3a3c42;
  font: 13px/20px "Open Sans", sans-serif;
}
.extensions { display: flex; align-items: center; gap: 16px; }
.sep { width: 2px; height: 16px; background: #d3e3fd; flex: none; }
.toolbar .profile { width: 20px; height: 20px; border-radius: 50%; background: #c5370c; color: #fff; }
.toolbar .restart {
  height: 34px;
  gap: 12px;
  margin-left: -4px;
  padding: 0 14px 0 13px;
  border-radius: 17px;
  background: #d3e3fd;
  color: #0a2a66;
}

.bookmarks {
  height: 35px;
  flex: none;
  display: flex;
  align-items: center;
  gap: 22px;
  padding: 0 15px 6px 13px;
  border-bottom: 1px solid #dadce0;
  white-space: nowrap;
}
.bookmarks a { display: flex; align-items: center; gap: 8px; }
.bookmarks svg { width: 16px; height: 16px; }
.bookmarks .folder { width: 18px; }
.bookmarks-end { display: flex; align-items: center; gap: 15px; margin-left: auto; }

/* Grafana */
.grafana {
  flex: 1;
  min-height: 0;
  display: flex;
  background: #0b0c0e;
  color: #c7d0d9;
  font: 14px/20px Roboto, sans-serif;
}
.sidebar {
  width: 60px;
  flex: none;
  display: flex;
  flex-direction: column;
  background: #141619;
  color: #9fa7b3;
}
.logo { display: flex; justify-content: center; padding: 11px 3px 52px 0; }
.menu a { display: flex; align-items: center; justify-content: center; height: 44px; padding-left: 2px; }
.menu svg { width: 24px; height: 24px; fill: none; stroke: currentColor; stroke-width: 2; }
.menu svg.plain, .menu svg.avatar, .menu .solid { stroke: none; }
.menu .solid { fill: currentColor; }
.menu svg.avatar { width: 28px; height: 28px; }
.menu-bottom { margin-top: auto; padding-bottom: 16px; }
.dash {
  flex: 1;
  min-width: 0;
  display: flex;
  flex-direction: column;
  position: relative;
  box-shadow: inset 10px 0 10px -6px #000;
}
.dash-head { flex: none; display: flex; align-items: center; padding: 11px 16px 28px; gap: 14px; }
.dash-head .apps { color: #c7d0d9; margin: 0 -7px 0 -1px; }
.dash-head h1 { flex: 1; font-size: 18px; line-height: 24px; font-weight: 400; color: #d8d9da; }
.group { display: flex; gap: 4px; color: #7b8087; }
.group button { width: 36px; height: 32px; border: 1px solid #2c3235; border-radius: 2px; background: #141619; }
.group .wide { width: 42px; }
.group svg { fill: none; stroke: currentColor; stroke-width: 2; }
.group .wide svg, .group svg.plain { stroke: none; }
.group .range { width: 142px; padding: 0 5px 0 8px; gap: 4px; font-weight: 500; }
.range span { flex: 1; text-align: left; }
.refresh { display: flex; }
.refresh .interval { width: 52px; margin-left: -1px; padding-right: 2px; color: #eb7b18; font-weight: 700; }
.interval svg { color: #c56a20; }

.panels {
  flex: 1;
  min-height: 0;
  display: grid;
  grid-template-columns: 1fr 1fr;
  grid-template-rows: 1fr 1fr;
  gap: 8px;
  padding: 0 122px 3px 16px;
}
.panel {
  min-height: 0;
  display: flex;
  flex-direction: column;
  position: relative;
  border: 1px solid #202226;
  border-radius: 3px;
  background: #141619;
  overflow: hidden;
}
.panel h2 { flex: none; height: 28px; font-size: 14px; line-height: 26px; font-weight: 500; text-align: center; }
.fill { flex: 1; min-height: 0; width: 100%; }
.gauge-value { font: 500 55px Roboto, sans-serif; fill: #73bf69; text-anchor: middle; }
.spark { position: absolute; left: 0; bottom: 0; width: 100%; height: 84px; }
.red-area { fill: #f2495c; fill-opacity: .2; }
.green-area { fill: #73bf69; fill-opacity: .2; }
.red-line, .green-line { fill: none; stroke: #c23c4d; }
.green-line { stroke: #5a9a53; }
.spike { stroke: #73bf69; stroke-width: 1.5; }
.big {
  flex: 1;
  display: flex;
  align-items: center;
  justify-content: center;
  padding-top: 2px;
  position: relative;
  font-size: 109px;
  line-height: 110px;
  font-weight: 500;
}
.red { color: #f2495c; }
.green { color: #73bf69; }
.grid { stroke: #2c3235; fill: none; }
.line { fill: none; stroke-width: 1; stroke-linejoin: round; }
.axis { font: 500 12px Roboto, sans-serif; fill: #b4bbc4; text-anchor: middle; }
.axis-y { text-anchor: end; }
.legend {
  flex: none;
  display: flex;
  flex-wrap: wrap;
  padding: 0 16px 8px 24px;
  list-style: none;
  font-size: 12px;
  line-height: 26px;
}
.legend li { display: flex; align-items: center; gap: 8px; margin-right: 10px; }
.legend li::before { content: ""; width: 14px; height: 4px; border-radius: 1px; background: currentColor; }
.l-green::before { color: #7eb26d; }
.l-yellow::before { color: #eab839; }
.l-blue::before { color: #6ed0e0; }
.page-thumb {
  position: absolute;
  right: 0;
  top: 57px;
  bottom: 14px;
  width: 8px;
  border-radius: 4px;
  background: linear-gradient(#343746 50%, #38383a);
}

/* Taskbar */
.taskbar {
  flex: none;
  height: 40px;
  display: flex;
  justify-content: space-between;
  background: linear-gradient(90deg, #202020, #272626 45%, #302b2d);
  color: #fff;
}
.apps-bar { display: flex; gap: 1px; }
.apps-bar button { width: 48px; height: 40px; border: solid transparent; border-width: 2px 0; }
.apps-bar svg { width: 24px; height: 24px; }
.apps-bar .open { background: linear-gradient(#76b9ed, #76b9ed) center bottom / 40px 2px no-repeat border-box; }
.apps-bar .current { background: linear-gradient(#76b9ed, #76b9ed) center bottom / 48px 2px no-repeat border-box, #555; }
.tray { display: flex; align-items: center; gap: 8px; }
.tray time { text-align: center; line-height: 18px; margin: 0 8px 0 4px; }
.notify { margin-right: 3px; }
.show-desktop { width: 5px; height: 40px; border-left: 1px solid #777; }
```
